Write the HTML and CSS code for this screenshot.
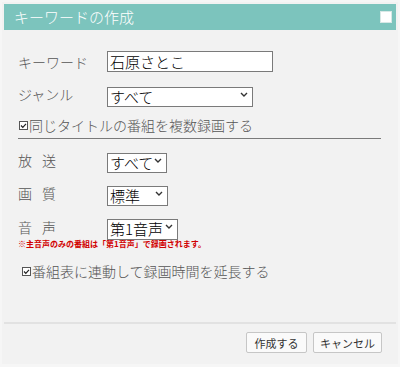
FILE: index.html
```html
<!DOCTYPE html>
<html lang="ja">
<head>
    <meta charset="UTF-8">
    <title>キーワードの作成</title>
    <link rel="stylesheet" href="styles.css">
</head>
<body>
    <div class="dialog">
        <div class="titlebar">
            <span class="title">キーワードの作成</span>
            <span class="close-box"></span>
        </div>

        <div class="content">
            <div class="row">
                <label class="label">キーワード</label>
                <input type="text" class="text-input" value="石原さとこ">
            </div>
            <div class="row row-genre">
                <label class="label">ジャンル</label>
                <span class="select-wrap sel-genre">
                    <select><option>すべて</option></select>
                    <svg class="chevron" width="8" height="5" viewBox="0 0 8 5"><path d="M1 1l3 3 3-3" fill="none" stroke="#333" stroke-width="1.4"/></svg>
                </span>
            </div>
            <div class="check-line">
                <svg class="check-icon" width="9" height="9" viewBox="0 0 9 9"><rect x="0.5" y="0.5" width="8" height="8" fill="#fff" stroke="#555"/><path d="M2 4.5l1.8 1.8L7 2.8" fill="none" stroke="#222" stroke-width="1.2"/></svg>同じタイトルの番組を複数録画する
            </div>
            <div class="divider"></div>

            <div class="row row-small row-first">
                <label class="label">放 送</label>
                <span class="select-wrap sel-bc">
                    <select><option>すべて</option></select>
                    <svg class="chevron" width="8" height="5" viewBox="0 0 8 5"><path d="M1 1l3 3 3-3" fill="none" stroke="#333" stroke-width="1.4"/></svg>
                </span>
            </div>
            <div class="row row-small">
                <label class="label">画 質</label>
                <span class="select-wrap sel-quality">
                    <select><option>標準</option></select>
                    <svg class="chevron" width="8" height="5" viewBox="0 0 8 5"><path d="M1 1l3 3 3-3" fill="none" stroke="#333" stroke-width="1.4"/></svg>
                </span>
            </div>
            <div class="row row-small">
                <label class="label">音 声</label>
                <span class="select-wrap sel-audio">
                    <select><option>第1音声</option></select>
                    <svg class="chevron" width="8" height="5" viewBox="0 0 8 5"><path d="M1 1l3 3 3-3" fill="none" stroke="#333" stroke-width="1.4"/></svg>
                </span>
            </div>
            <p class="note">※主音声のみの番組は「第1音声」で録画されます。</p>
            <div class="check-line check-extend">
                <svg class="check-icon" width="9" height="9" viewBox="0 0 9 9"><rect x="0.5" y="0.5" width="8" height="8" fill="#fff" stroke="#555"/><path d="M2 4.5l1.8 1.8L7 2.8" fill="none" stroke="#222" stroke-width="1.2"/></svg>番組表に連動して録画時間を延長する
            </div>
        </div>

        <div class="footer">
            <button class="btn btn-create">作成する</button>
            <button class="btn btn-cancel">キャンセル</button>
        </div>
    </div>
</body>
</html>
```

FILE: styles.css
```css
body {
    margin: 0;
    background-color: #f6f6f6;
    font-family: "Noto Sans CJK JP", "Noto Sans", sans-serif;
    font-weight: 300;
}
.dialog {
    margin: 2px;
    padding: 2px 2px 0;
    height: 362px;
    box-sizing: border-box;
    background-color: #f2f2f2;
    display: flex;
    flex-direction: column;
}
.titlebar {
    height: 26px;
    background-color: #7cc4bd;
    display: flex;
    align-items: center;
    justify-content: space-between;
    padding: 0 4px 0 10px;
    color: #fff;
}
.title {
    font-size: 15px;
    line-height: 26px;
}
.close-box {
    width: 12px;
    height: 12px;
    background-color: #fff;
    border: 1px solid #d8e8e6;
    box-sizing: border-box;
}
.content {
    flex: 1;
    padding: 21px 15px 0 14px;
}
.row {
    display: flex;
    align-items: center;
}
.label {
    width: 89px;
    font-size: 14px;
    line-height: 20px;
    color: #555;
    word-spacing: 7px;
}
.text-input {
    width: 166px;
    height: 21px;
    box-sizing: border-box;
    border: 1px solid #7a7a7a;
    padding: 0 2px;
    font-family: inherit;
    font-weight: 300;
    font-size: 15px;
    color: #000;
    background-color: #fff;
    outline: none;
}
.row-genre {
    margin-top: 12px;
}
.select-wrap {
    position: relative;
    display: inline-block;
    height: 20px;
}
.select-wrap select {
    appearance: none;
    -webkit-appearance: none;
    width: 100%;
    height: 100%;
    box-sizing: border-box;
    border: 1px solid #7a7a7a;
    border-radius: 0;
    background-color: #fff;
    padding: 0 0 0 2px;
    font-family: inherit;
    font-weight: 300;
    font-size: 15px;
    line-height: 18px;
    color: #000;
}
.chevron {
    position: absolute;
    right: 5px;
    top: 8px;
}
.sel-genre {
    width: 146px;
}
.sel-bc {
    width: 60px;
}
.sel-quality {
    width: 61px;
}
.sel-audio {
    width: 71px;
    height: 21px;
}
.check-line {
    margin-top: 11px;
    display: flex;
    align-items: center;
    font-size: 14px;
    line-height: 20px;
    color: #555;
}
.check-icon {
    margin: 0 1px 0 1px;
}
.divider {
    margin-top: 3px;
    border-top: 1px solid #7a7a7a;
}
.row-small {
    margin-top: 13px;
}
.row-first {
    margin-top: 11px;
}
.note {
    margin: 2px 0 0;
    font-size: 8px;
    line-height: 10px;
    font-weight: bold;
    color: #d10000;
}
.check-extend {
    margin-top: 12px;
    padding-left: 3px;
}
.footer {
    border-top: 2px solid #e2e2e2;
    padding: 8px 14px 11px 0;
    display: flex;
    justify-content: flex-end;
    gap: 6px;
}
.btn {
    height: 21px;
    padding: 0;
    border: 1px solid #c6c6c6;
    border-radius: 2px;
    background-color: #fafafa;
    font-family: inherit;
    font-weight: 400;
    font-size: 11px;
    color: #333;
    cursor: pointer;
}
.btn-create {
    width: 61px;
}
.btn-cancel {
    width: 69px;
}
```
